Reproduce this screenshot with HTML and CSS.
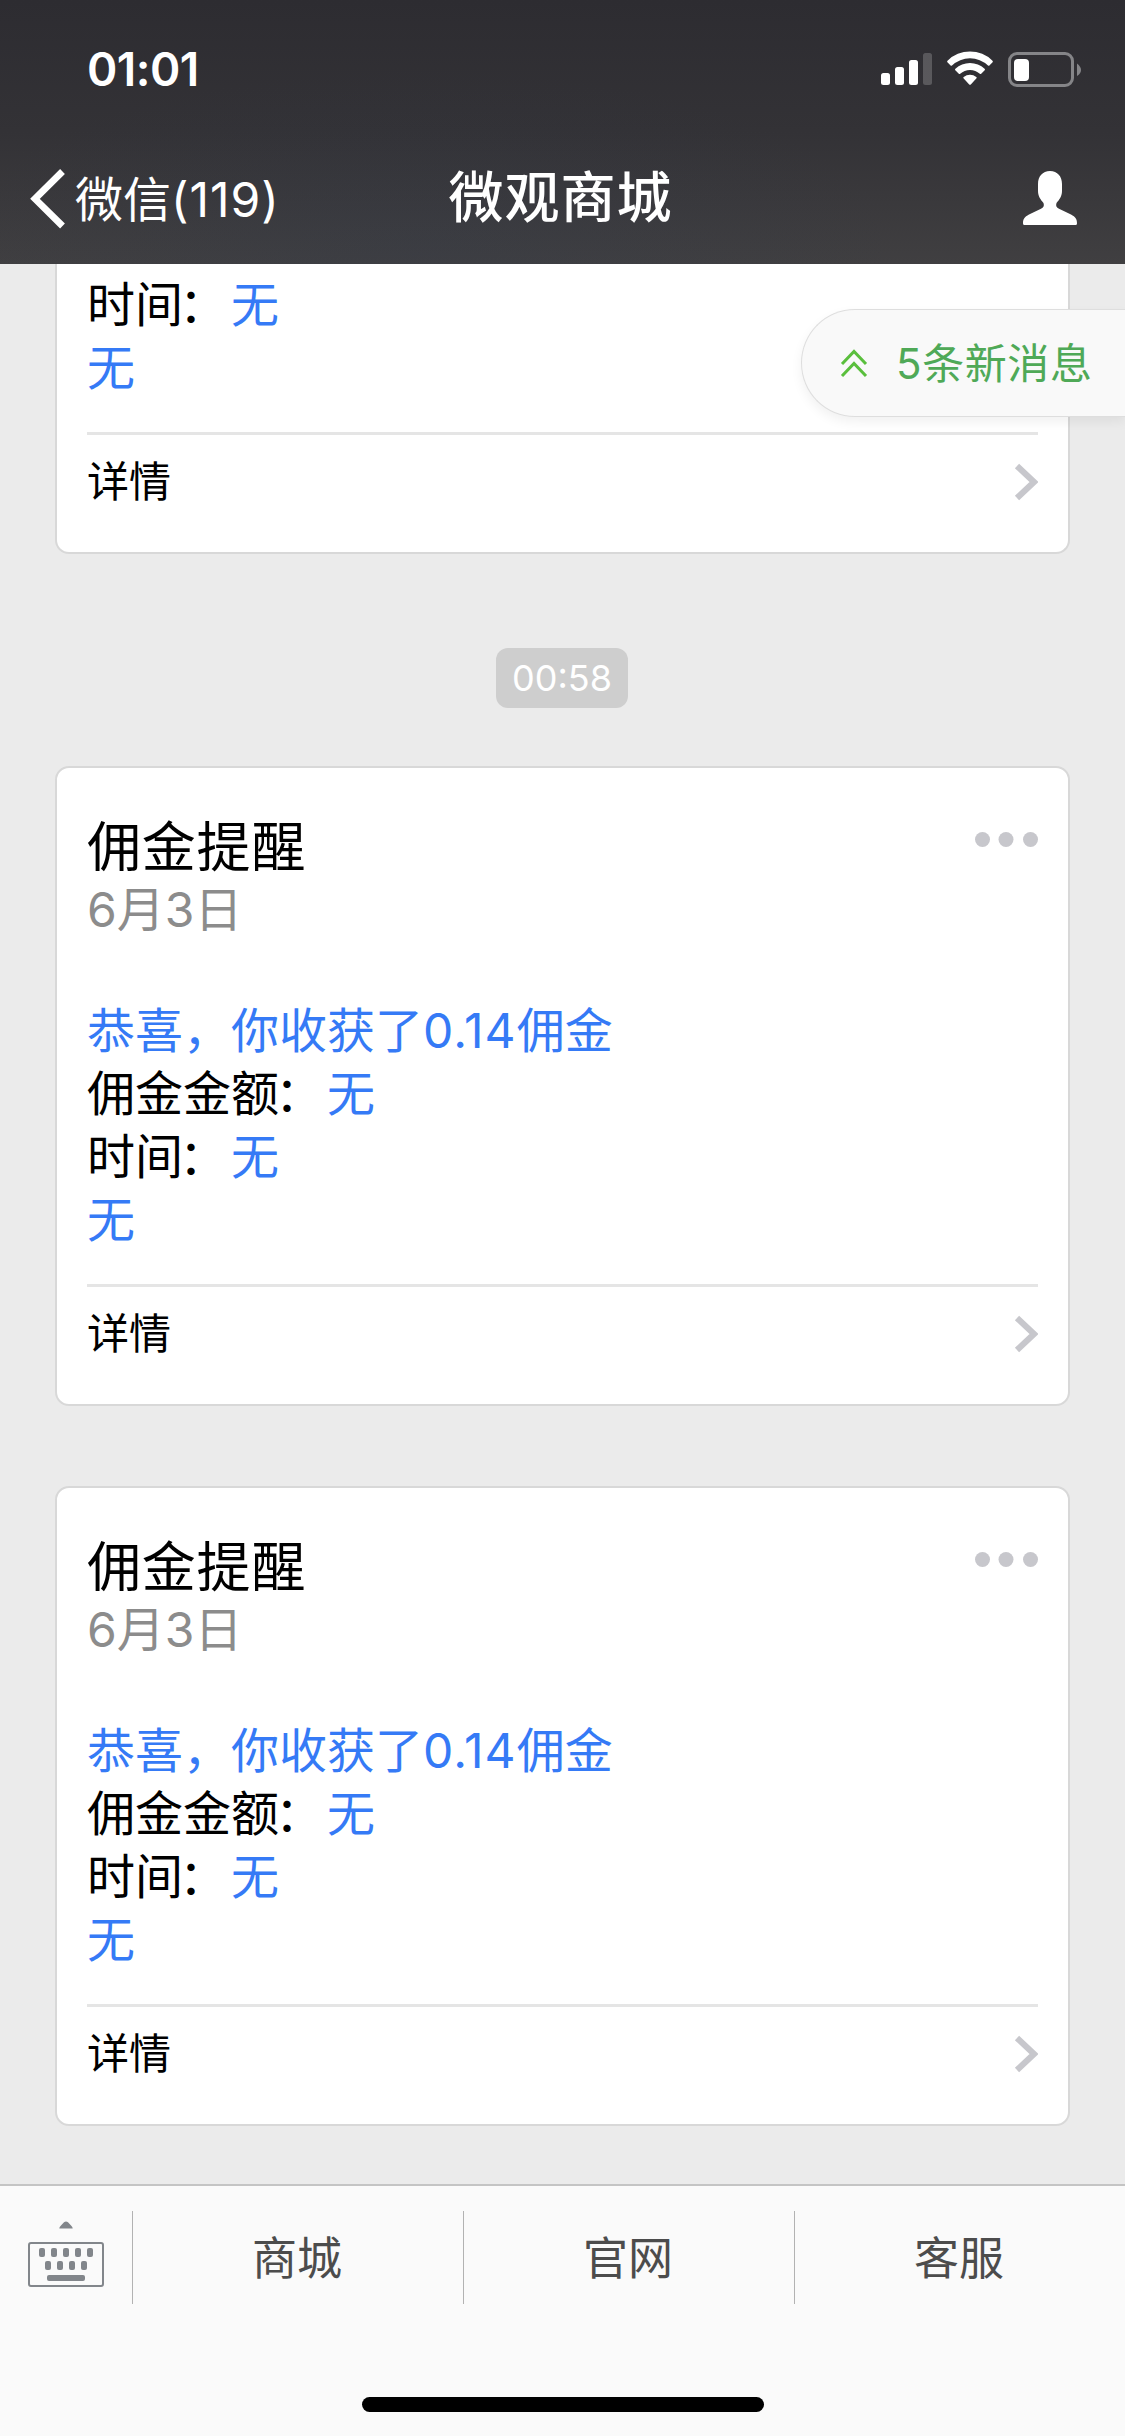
FILE: index.html
```html
<!DOCTYPE html>
<html lang="zh-CN">
<head>
<meta charset="utf-8">
<title>微观商城</title>
<link rel="stylesheet" href="styles.css">
</head>
<body>
<div class="app">
  <header class="header">
    <div class="status">
      <span class="clock">01:01</span>
      <svg class="status-icons" width="202" height="36" viewBox="0 0 202 36" fill="#fff">
        <rect x="1" y="22" width="9" height="12" rx="2.5"/>
        <rect x="15" y="16" width="9" height="18" rx="2.5"/>
        <rect x="29" y="9" width="9" height="25" rx="2.5"/>
        <rect x="43" y="2" width="9" height="32" rx="2.5" opacity=".2"/>
        <path d="M67.4 11.2Q66.8 10.4 67.5 9.700A32 32 0 0 1 112.500 9.700Q113.200 10.400 112.600 11.200L109.400 14.500Q108.700 15 108 14.500A26 26 0 0 0 72 14.500Q71.300 15 70.600 14.500Z"/>
        <path d="M75.300 19.300Q74.600 18.500 75.400 17.800A21 21 0 0 1 104.600 17.800Q105.400 18.500 104.700 19.300L101.200 22.800Q100.500 23.300 99.800 22.700A14.500 14.500 0 0 0 80.200 22.700Q79.500 23.300 78.800 22.800Z"/>
        <path d="M83.500 27.300Q82.800 26.500 83.700 25.900A10.300 10.300 0 0 1 96.300 25.900Q97.200 26.500 96.500 27.300L90.800 33.500Q90 34.200 89.200 33.500Z"/>
        <rect x="129.500" y="2.500" width="63" height="32" rx="7.500" fill="none" stroke="#858588" stroke-width="3"/>
        <rect x="134" y="8" width="15" height="22" rx="4"/>
        <path d="M197 12.500Q201 15.500 201 19T197 25Z" fill="#858588"/>
      </svg>
    </div>
    <nav class="nav">
      <div class="back">
        <svg width="36" height="60" viewBox="0 0 36 60"><path d="M32.500 2.500L5 29.800L32.500 57" fill="none" stroke="#fff" stroke-width="6.800" stroke-linejoin="miter"/></svg>
        <span class="back-label">微信<span class="count">(119)</span></span>
      </div>
      <h1 class="title">微观商城</h1>
      <div class="profile">
        <svg width="54" height="54" viewBox="0 0 54 54"><path d="M27 0C34.500 0 39 5.500 39 13V20C39 25.500 36 29 33.500 32C32.500 35 33.500 36.500 36 37.800L48 43.600C52.500 46 54 48 54 52.500Q54 54 52.500 54H1.500Q0 54 0 52.500C0 48 1.500 46 6 43.600L18 37.800C20.500 36.500 21.500 35 20.500 32C18 29 15 25.500 15 20V13C15 5.500 19.500 0 27 0Z" fill="#fff"/></svg>
      </div>
    </nav>
  </header>

  <main class="chat">
    <article class="card card-clipped">
      <div class="lines">
        <p>时间<i>：</i><b>无</b></p>
        <p><b>无</b></p>
      </div>
      <div class="detail"><span>详情</span><svg width="24" height="38" viewBox="0 0 24 38"><path d="M3 3L20 19L3 35" fill="none" stroke="#c7c7cc" stroke-width="6.200"/></svg></div>
    </article>

    <time class="stamp">00:58</time>

    <article class="card">
      <div class="card-head">
        <h2>佣金提醒</h2>
        <svg width="63" height="15" viewBox="0 0 63 15" fill="#c7c7cc"><circle cx="7.500" cy="7.500" r="7.500"/><circle cx="31" cy="7.500" r="7.500"/><circle cx="55.500" cy="7.500" r="7.500"/></svg>
      </div>
      <div class="date">6月3日</div>
      <div class="lines">
        <p><b>恭喜，你收获了<span class="amount">0.14</span>佣金</b></p>
        <p>佣金金额<i>：</i><b>无</b></p>
        <p>时间<i>：</i><b>无</b></p>
        <p><b>无</b></p>
      </div>
      <div class="detail"><span>详情</span><svg width="24" height="38" viewBox="0 0 24 38"><path d="M3 3L20 19L3 35" fill="none" stroke="#c7c7cc" stroke-width="6.200"/></svg></div>
    </article>

    <article class="card">
      <div class="card-head">
        <h2>佣金提醒</h2>
        <svg width="63" height="15" viewBox="0 0 63 15" fill="#c7c7cc"><circle cx="7.500" cy="7.500" r="7.500"/><circle cx="31" cy="7.500" r="7.500"/><circle cx="55.500" cy="7.500" r="7.500"/></svg>
      </div>
      <div class="date">6月3日</div>
      <div class="lines">
        <p><b>恭喜，你收获了<span class="amount">0.14</span>佣金</b></p>
        <p>佣金金额<i>：</i><b>无</b></p>
        <p>时间<i>：</i><b>无</b></p>
        <p><b>无</b></p>
      </div>
      <div class="detail"><span>详情</span><svg width="24" height="38" viewBox="0 0 24 38"><path d="M3 3L20 19L3 35" fill="none" stroke="#c7c7cc" stroke-width="6.200"/></svg></div>
    </article>

    <div class="unread">
      <svg width="28" height="30" viewBox="0 0 28 30" fill="none" stroke="#5abf3d" stroke-width="3"><path d="M2 16L14 3.500L26 16M2 28L14 15.500L26 28"/></svg>
      <span>5条新消息</span>
    </div>
  </main>

  <footer class="footer">
    <div class="menu">
      <div class="keyboard">
        <svg width="76" height="66" viewBox="0 0 76 66" fill="#82868b">
          <path d="M31.300 7.500Q31.300 6 32.500 5L36 1.300Q38 -.300 40 1.300L43.500 5Q44.700 6 44.700 7.500Z"/>
          <rect x="1" y="22" width="74" height="43" rx="2" fill="none" stroke="#82868b" stroke-width="2"/>
          <rect x="11" y="27" width="6" height="9" rx="2"/><rect x="23" y="27" width="6" height="9" rx="2"/><rect x="35" y="27" width="6" height="9" rx="2"/><rect x="47" y="27" width="6" height="9" rx="2"/><rect x="59" y="27" width="6" height="9" rx="2"/>
          <rect x="17" y="40" width="6" height="9" rx="2"/><rect x="29" y="40" width="6" height="9" rx="2"/><rect x="41" y="40" width="6" height="9" rx="2"/><rect x="53" y="40" width="6" height="9" rx="2"/>
          <rect x="19" y="54" width="38" height="6" rx="2"/>
        </svg>
      </div>
      <div class="tab">商城</div>
      <div class="tab">官网</div>
      <div class="tab">客服</div>
    </div>
    <div class="home"></div>
  </footer>
</div>
</body>
</html>
```
FILE: styles.css
```css
* { box-sizing: border-box; margin: 0; padding: 0; }
body { font-family: Inter, "Noto Sans CJK SC", sans-serif; color: #000; background: #ebebeb; }
svg { display: block; flex: none; }
.app { width: 1125px; height: 2436px; display: flex; flex-direction: column; overflow: hidden; }

.header {
  flex: none; height: 264px; color: #fff;
  background:
    radial-gradient(ellipse 480px 180px at 420px 250px, rgba(48, 58, 76, .22), transparent),
    linear-gradient(#2d2c31, #333236 50%, #403f41);
}
.status { height: 132px; padding: 0 43px 0 87px; display: flex; justify-content: space-between; }
.clock { margin-top: 39px; font-size: 46px; line-height: 60px; font-weight: 600; letter-spacing: -.5px; }
.status-icons { margin-top: 51px; }
.nav { height: 132px; display: grid; grid-template-columns: 1fr auto 1fr; align-items: center; }
.back { display: flex; align-items: center; padding-left: 30px; }
.back > svg { margin-top: 2px; }
.back-label { margin: 4px 0 0 9px; font-size: 48px; line-height: 64px; }
.count { letter-spacing: 1px; }
.title { font-size: 55px; line-height: 64px; font-weight: 500; letter-spacing: 1px; padding: 0 4px 3px 0; }
.profile { display: flex; justify-content: flex-end; padding-right: 48px; }

.chat {
  position: relative; flex: none; height: 1920px; padding: 0 55px 58px;
  display: flex; flex-direction: column; justify-content: flex-end; overflow: hidden;
}
.card { flex: none; height: 640px; background: #fff; border: 2px solid #d8d8d8; border-radius: 14px; padding: 48px 30px 0; }
.card + .card { margin-top: 80px; }
.card-clipped { height: 290px; border-top: 0; border-radius: 0 0 14px 14px; padding-top: 9px; }
.card-head { display: flex; justify-content: space-between; height: 62px; }
.card-head svg { margin-top: 16px; }
.card-head h2 { font-size: 54px; line-height: 63px; font-weight: 400; letter-spacing: .8px; }
.date { height: 63px; font-size: 48px; line-height: 63px; color: #8c8c8c; }
.lines { font-size: 48px; line-height: 63px; }
.card-head ~ .lines { margin-top: 58px; }
.lines b { font-weight: 400; color: #357af6; }
/* The colon sits slightly left within its full-width cell */
.lines i { font-style: normal; margin: 0 4px 0 -4px; }
.amount { letter-spacing: 1.1px; }
.detail {
  margin-top: 33px; padding-top: 15px; height: 103px; border-top: 3px solid #e5e5e5;
  display: flex; justify-content: space-between; align-items: flex-start; font-size: 42px; line-height: 64px;
}
.detail svg { margin-top: 13px; }
.stamp {
  flex: none; align-self: center; width: 132px; height: 60px; margin: 94px 1px 58px 0; border-radius: 12px;
  background: #cecece; color: #fff; font-size: 36px; line-height: 60px; text-align: center;
}
.unread {
  position: absolute; top: 45px; right: 0; width: 324px; height: 108px; padding-left: 38px;
  display: flex; align-items: center; background: #f9f9f9; border: 1px solid #dedede; border-right: 0;
  border-radius: 54px 0 0 54px; box-shadow: 0 5px 12px rgba(0, 0, 0, .06);
  color: #4fa957; font-size: 42px; line-height: 60px; letter-spacing: .6px;
}
.unread span { margin: 2px 0 0 28px; white-space: nowrap; }

.footer { flex: none; height: 252px; background: #fafafa; border-top: 2px solid #c4c4c4; }
.menu { height: 144px; padding: 25px 0; display: flex; }
.keyboard { width: 132px; padding: 10px 0 0 28px; }
.tab { flex: 1; border-left: 1px solid #b2b2b2; height: 93px; padding-right: 2px; text-align: center; font-size: 45px; line-height: 95px; color: #4c4c4c; }
.home { width: 402px; height: 15px; margin: 67px auto 0; border-radius: 8px; background: #000; }
```
